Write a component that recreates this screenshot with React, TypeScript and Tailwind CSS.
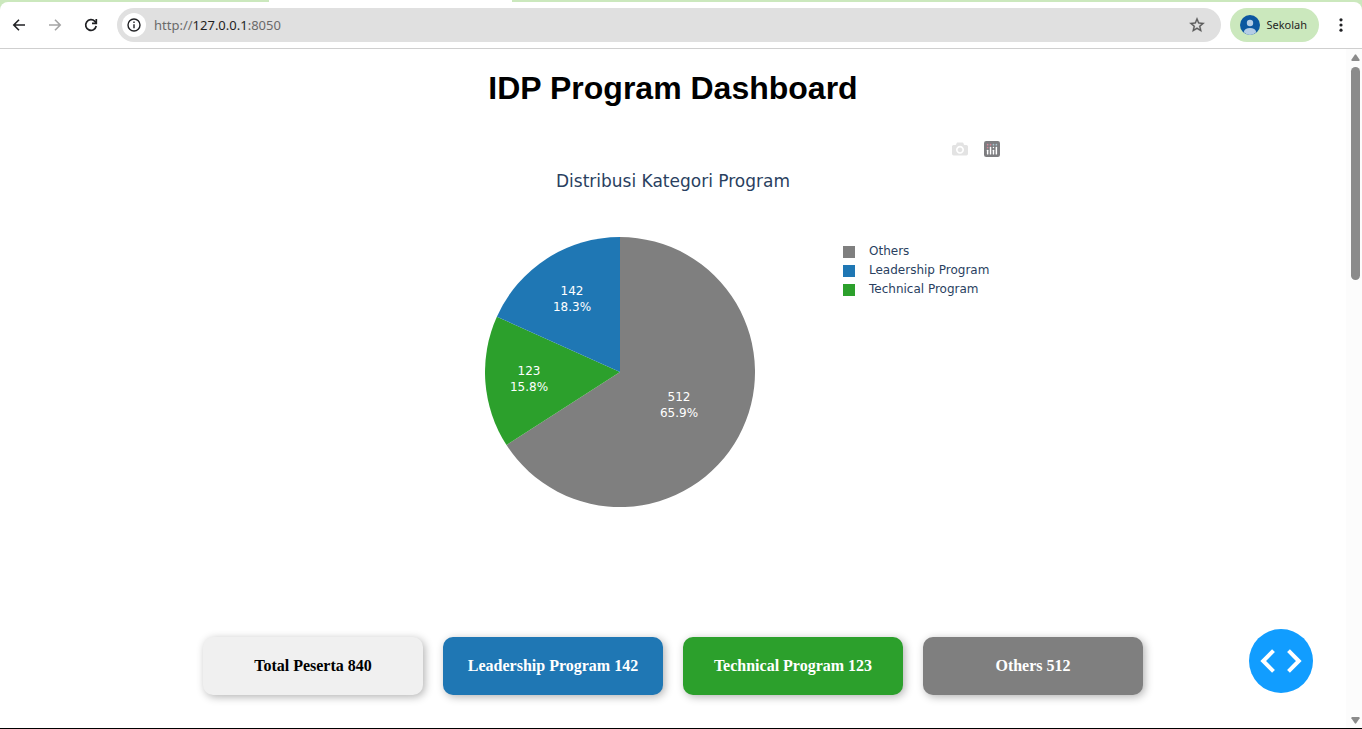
import React from "react";

type Slice = {
  label: string;
  value: number;
  color: string;
  textX: number;
  textY: number;
};

const slices: Slice[] = [
  { label: "Others", value: 512, color: "#7f7f7f", textX: 194, textY: 164 },
  { label: "Technical Program", value: 123, color: "#2ca02c", textX: 44, textY: 138 },
  { label: "Leadership Program", value: 142, color: "#1f77b4", textX: 87, textY: 58 },
];

const legend = [
  { label: "Others", swatch: "bg-[#7f7f7f]" },
  { label: "Leadership Program", swatch: "bg-[#1f77b4]" },
  { label: "Technical Program", swatch: "bg-[#2ca02c]" },
];

const cards = [
  { text: "Total Peserta 840", style: "bg-[#f0f0f0] text-black" },
  { text: "Leadership Program 142", style: "bg-[#1f77b4] text-white" },
  { text: "Technical Program 123", style: "bg-[#2ca02c] text-white" },
  { text: "Others 512", style: "bg-[#7f7f7f] text-white" },
];

const RADIUS = 135;

function PieChart() {
  const total = slices.reduce((sum, s) => sum + s.value, 0);
  const point = (fraction: number) => {
    const angle = fraction * 2 * Math.PI;
    return `${(RADIUS + RADIUS * Math.sin(angle)).toFixed(2)} ${(RADIUS - RADIUS * Math.cos(angle)).toFixed(2)}`;
  };
  let start = 0;
  return (
    <svg width="270" height="270" viewBox="0 0 270 270" className="shrink-0" role="img" aria-label="Distribusi Kategori Program">
      {slices.map((s) => {
        const from = start;
        const share = s.value / total;
        start += share;
        return (
          <g key={s.label}>
            <path
              d={`M135 135L${point(from)}A135 135 0 ${share > 0.5 ? 1 : 0} 1 ${point(from + share)}Z`}
              fill={s.color}
            />
            <text textAnchor="middle" fill="#fff" className="text-xs">
              <tspan x={s.textX} y={s.textY}>{s.value}</tspan>
              <tspan x={s.textX} y={s.textY + 16}>{`${(share * 100).toFixed(1)}%`}</tspan>
            </text>
          </g>
        );
      })}
    </svg>
  );
}

function BrowserBar() {
  return (
    <header className="bg-[#cbe8bd] font-['Noto_Sans',sans-serif]">
      <div className="ml-[269px] h-[2px] w-[243px] bg-white" />
      <div className="flex h-[47px] items-center rounded-t-lg border-b border-[#cfcfcf] bg-white pr-[11px] pl-[9px]">
        <div className="flex gap-4">
          <button aria-label="Back" className="flex size-5 items-center justify-center">
            <svg width="20" height="20" viewBox="0 0 20 20" fill="none" stroke="#202124" strokeWidth="1.6">
              <path d="M16 10H4.800M10 4.800L4.800 10l5.200 5.200" />
            </svg>
          </button>
          <button aria-label="Forward" className="flex size-5 items-center justify-center">
            <svg width="20" height="20" viewBox="0 0 20 20" fill="none" stroke="#a5a5a5" strokeWidth="1.6">
              <path d="M4 10h11.200M10 4.800l5.200 5.200-5.200 5.200" />
            </svg>
          </button>
          <button aria-label="Reload" className="flex size-5 items-center justify-center">
            <svg width="20" height="20" viewBox="0 0 20 20" fill="none" stroke="#202124" strokeWidth="1.700">
              <path d="M15.200 11a5.300 5.300 0 1 1-1.300-4.600l1.300 1.400" />
              <path d="M15.300 4v4.300H11" />
            </svg>
          </button>
        </div>
        <div className="ml-4 flex h-[34px] flex-1 items-center rounded-full bg-[#e0e0e0] pr-[15px] pl-[5px]">
          <button aria-label="Site information" className="flex size-6 items-center justify-center rounded-full bg-white">
            <svg width="14" height="14" viewBox="0 0 14 14" fill="none" stroke="#202124" strokeWidth="1.400">
              <circle cx="7" cy="7" r="6" />
              <path d="M7 6.200v4M7 3.600v1.500" />
            </svg>
          </button>
          <a href="http://127.0.0.1:8050" className="ml-2 flex-1 text-[13px] leading-5 text-[#6a6a6a]">
            http://<span className="text-[#1f1f1f]">127.0.0.1</span>:8050
          </a>
          <button aria-label="Bookmark this page">
            <svg width="18" height="18" viewBox="0 0 24 24" fill="#5a5a5a" stroke="#5a5a5a" strokeWidth="0.400">
              <path d="M22 9.240l-7.190-.62L12 2 9.190 8.630 2 9.240l5.460 4.730L5.820 21 12 17.270 18.180 21l-1.630-7.030L22 9.240zM12 15.400l-3.760 2.270 1-4.280-3.320-2.880 4.380-.38L12 6.100l1.710 4.040 4.380.38-3.320 2.880 1 4.280L12 15.400z" />
            </svg>
          </button>
        </div>
        <button className="ml-[9px] flex h-[34px] items-center gap-[6px] rounded-full bg-[#cbe8bd] pr-3 pl-[10px] text-[11px] text-[#1f1f1f]">
          <svg width="20" height="20" viewBox="0 0 20 20">
            <circle cx="10" cy="10" r="10" fill="#0b57a0" />
            <circle cx="10" cy="8" r="3.200" fill="#b4cde5" />
            <path d="M3.700 17.300c.6-3 3-4.300 6.300-4.300s5.700 1.300 6.300 4.300A10 10 0 0 1 10 20a10 10 0 0 1-6.300-2.700z" fill="#b4cde5" />
          </svg>
          Sekolah
        </button>
        <button aria-label="Menu" className="ml-3 flex size-5 items-center justify-center">
          <svg width="4" height="16" viewBox="0 0 4 16" fill="#202124">
            <circle cx="2" cy="2.800" r="1.600" />
            <circle cx="2" cy="8" r="1.600" />
            <circle cx="2" cy="13.200" r="1.600" />
          </svg>
        </button>
      </div>
    </header>
  );
}

function Chart() {
  return (
    <section className="mx-auto mt-[34px] w-[654px] max-w-full font-['DejaVu_Sans',Verdana,sans-serif] text-[#2a3f5f]">
      <div className="flex justify-end gap-4">
        <button aria-label="Download plot as a png">
          <svg width="16" height="16" viewBox="0 0 1000 1000" fill="#e3e3e3">
            <path d="m500 450c-83 0-150-67-150-150 0-83 67-150 150-150 83 0 150 67 150 150 0 83-67 150-150 150z m400 150h-120c-16 0-34 13-39 29l-31 93c-6 15-23 28-40 28h-340c-16 0-34-13-39-28l-31-94c-6-15-23-28-40-28h-120c-55 0-100-45-100-100v-450c0-55 45-100 100-100h800c55 0 100 45 100 100v450c0 55-45 100-100 100z m-400-550c-138 0-250 112-250 250 0 138 112 250 250 250 138 0 250-112 250-250 0-138-112-250-250-250z" transform="matrix(1 0 0 -1 0 850)" />
          </svg>
        </button>
        <a href="https://plotly.com/" aria-label="Produced with Plotly">
          <svg width="16" height="16" viewBox="0 0 132 132">
            <rect width="132" height="132" rx="18" fill="#7d7d80" />
            <g fill="#a9c5cf">
              <circle cx="78" cy="30" r="7" />
              <circle cx="102" cy="30" r="7" />
            </g>
            <g fill="#d7899b">
              <circle cx="30" cy="30" r="7" />
              <circle cx="54" cy="30" r="7" />
              <circle cx="30" cy="54" r="7" />
            </g>
            <g fill="#fff">
              <rect x="24" y="72" width="12" height="40" rx="5" />
              <rect x="48" y="48" width="12" height="64" rx="5" />
              <rect x="72" y="72" width="12" height="40" rx="5" />
              <rect x="96" y="48" width="12" height="64" rx="5" />
              <circle cx="78" cy="54" r="6" />
            </g>
          </svg>
        </a>
      </div>
      <h2 className="mt-3 text-center text-[17px] leading-6">Distribusi Kategori Program</h2>
      <div className="mt-11 flex pl-[139px]">
        <PieChart />
        <ul className="mt-[5px] ml-[88px] text-xs leading-[19px]">
          {legend.map((item) => (
            <li key={item.label} className="flex items-center gap-[14px] whitespace-nowrap">
              <span className={`size-3 ${item.swatch}`} />
              {item.label}
            </li>
          ))}
        </ul>
      </div>
    </section>
  );
}

function Scrollbar() {
  return (
    <div aria-hidden="true" className="flex w-4 shrink-0 flex-col items-center bg-[#fcfcfc] pt-[5px] pb-1 pl-[3px]">
      <svg width="9" height="7" viewBox="0 0 10 8" fill="#8b8b8b">
        <path d="M4.200.8Q5 0 5.800.8L9.700 6.500Q9.800 8 9 8H1Q.2 8 .3 6.500Z" />
      </svg>
      <div className="mt-[6px] h-[213px] w-[9px] rounded-full bg-[#8b8b8b]" />
      <svg width="9" height="7" viewBox="0 0 10 8" fill="#8b8b8b" className="mt-auto">
        <path d="M4.200 7.200Q5 8 5.800 7.200L9.700 1.500Q9.800 0 9 0H1Q.2 0 .3 1.500Z" />
      </svg>
    </div>
  );
}

export default function App() {
  return (
    <div className="flex min-h-screen flex-col border-b border-black bg-white">
      <BrowserBar />
      <div className="flex flex-1">
        <main className="min-w-0 flex-1 pb-8">
          <h1 className="mt-5 text-center font-['Liberation_Sans',Arial,sans-serif] text-[32px] leading-[38px] font-bold text-black">
            IDP Program Dashboard
          </h1>
          <Chart />
          <div className="mt-[130px] flex flex-wrap justify-center gap-5">
            {cards.map((card) => (
              <div
                key={card.text}
                className={`w-[220px] rounded-[10px] py-5 text-center font-['Liberation_Serif','Times_New_Roman',serif] text-base leading-[18px] font-bold shadow-[2px_2px_8px_rgba(0,0,0,0.3)] ${card.style}`}
              >
                {card.text}
              </div>
            ))}
          </div>
        </main>
        <Scrollbar />
      </div>
      <button aria-label="Open developer tools" className="fixed right-[49px] bottom-9 flex size-16 items-center justify-center rounded-full bg-[#119dff]">
        <svg width="42" height="24" viewBox="0 0 42 24" fill="none" stroke="#fff" strokeWidth="4">
          <path d="M13.500 1.700L3.200 12l10.300 10.300M28.500 1.700L38.800 12 28.500 22.300" />
        </svg>
      </button>
    </div>
  );
}
